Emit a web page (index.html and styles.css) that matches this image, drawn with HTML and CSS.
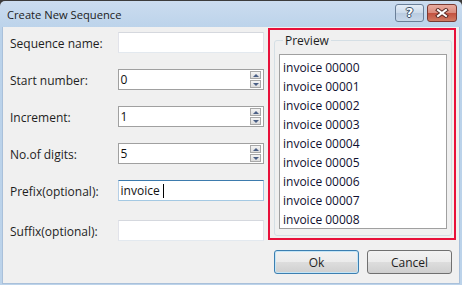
FILE: index.html
```html
<!DOCTYPE html>
<html lang="en">
<head>
    <meta charset="UTF-8">
    <meta name="viewport" content="width=device-width, initial-scale=1.0">
    <title>Create New Sequence</title>
    <link rel="stylesheet" href="styles.css">
</head>
<body>
    <div class="window">
        <div class="titlebar">
            <span class="title">Create New Sequence</span>
            <div class="caption-buttons">
                <span class="cap-btn help">?</span>
                <span class="cap-btn close">
                    <svg width="14" height="10" viewBox="0 0 14 10">
                        <path d="M3 2 L11 8 M11 2 L3 8" stroke="#5a2a25" stroke-width="4" stroke-linecap="square"/>
                        <path d="M3 2 L11 8 M11 2 L3 8" stroke="#fff" stroke-width="2" stroke-linecap="square"/>
                    </svg>
                </span>
            </div>
        </div>
        <div class="content">
            <div class="form">
                <div class="row">
                    <label>Sequence name:</label>
                    <div class="textbox"></div>
                </div>
                <div class="row">
                    <label>Start number:</label>
                    <div class="spinbox">
                        <span class="value">0</span>
                        <div class="spin"><span class="up"></span><span class="down"></span></div>
                    </div>
                </div>
                <div class="row">
                    <label>Increment:</label>
                    <div class="spinbox">
                        <span class="value">1</span>
                        <div class="spin"><span class="up"></span><span class="down"></span></div>
                    </div>
                </div>
                <div class="row">
                    <label>No.of digits:</label>
                    <div class="spinbox">
                        <span class="value">5</span>
                        <div class="spin"><span class="up"></span><span class="down"></span></div>
                    </div>
                </div>
                <div class="row">
                    <label>Prefix(optional):</label>
                    <div class="textbox focused"><span class="value">invoice </span><span class="caret"></span></div>
                </div>
                <div class="row last">
                    <label>Suffix(optional):</label>
                    <div class="textbox"></div>
                </div>
            </div>
            <div class="side">
                <div class="highlight">
                    <fieldset class="group">
                        <legend>Preview</legend>
                        <ul class="listbox">
                            <li>invoice 00000</li>
                            <li>invoice 00001</li>
                            <li>invoice 00002</li>
                            <li>invoice 00003</li>
                            <li>invoice 00004</li>
                            <li>invoice 00005</li>
                            <li>invoice 00006</li>
                            <li>invoice 00007</li>
                            <li>invoice 00008</li>
                        </ul>
                    </fieldset>
                </div>
                <div class="buttons">
                    <button class="btn default">Ok</button>
                    <button class="btn">Cancel</button>
                </div>
            </div>
        </div>
    </div>
</body>
</html>
```

FILE: styles.css
```css
body {
    margin: 0;
    background-color: #3c3c3c;
    font-family: "Open Sans", "Noto Sans", sans-serif;
    font-size: 12px;
    color: #1e1e1e;
}

.window {
    width: 462px;
    height: 285px;
    box-sizing: border-box;
    margin-top: 1px;
    padding: 0 2px 2px 2px;
    background: linear-gradient(#cbdcef, #bad2ea 30px, #bcd3ea);
    border-radius: 5px 5px 0 0;
    display: flex;
    flex-direction: column;
}

.titlebar {
    height: 26px;
    display: flex;
    align-items: center;
    justify-content: space-between;
}

.title {
    padding-left: 5px;
    padding-top: 1px;
    color: #1c1c1c;
    font-size: 11.2px;
}

.caption-buttons {
    display: flex;
    gap: 3px;
    margin-right: 3px;
    margin-top: -3px;
}

.cap-btn {
    height: 16px;
    border: 1px solid #6a7f98;
    border-radius: 3px;
    display: flex;
    align-items: center;
    justify-content: center;
}

.help {
    width: 27px;
    background: linear-gradient(#e4edf7, #cbdaea 50%, #b9cbe0 51%, #c8d8ea);
    color: #fff;
    font-family: "DejaVu Sans", sans-serif;
    font-weight: bold;
    font-size: 13px;
    text-shadow: 0 0 1px #3b4f68, 1px 0 0 #3b4f68, -1px 0 0 #3b4f68, 0 1px 0 #3b4f68, 0 -1px 0 #3b4f68;
}

.close {
    width: 28px;
    border-color: #7a3a32;
    background: linear-gradient(#e8ab9f, #d98a7b 50%, #c2503f 51%, #d17a62);
}

.content {
    flex: 1;
    background-color: #f0f0f0;
    border: 1px solid #a9c0da;
    border-top: none;
    display: flex;
    padding: 1px 2px 0 6px;
}

.form {
    width: 255px;
    padding-top: 4px;
    display: flex;
    flex-direction: column;
    gap: 16px;
}

.row {
    display: flex;
    align-items: center;
    height: 21px;
}

.row.last {
    margin-top: 3px;
}

.row label {
    width: 108px;
    padding-left: 1px;
    padding-top: 2px;
}

.textbox,
.spinbox {
    width: 147px;
    height: 21px;
    box-sizing: border-box;
    background-color: #fff;
    display: flex;
    align-items: center;
    padding-left: 2px;
}

.textbox {
    border: 1px solid #e2e3ea;
    border-top-color: #d5d8de;
    border-bottom-color: #e3e9ef;
}

.textbox.focused {
    border-color: #a4c9e3;
    border-top-color: #3d7bad;
    border-left-color: #b5cfe7;
}

.spinbox {
    border: 1px solid #a0a0a0;
    justify-content: space-between;
    padding-right: 2px;
}

.value {
    color: #111;
    white-space: pre;
}

.caret {
    width: 1px;
    height: 14px;
    background-color: #000;
}

.spin {
    display: flex;
    flex-direction: column;
    gap: 1px;
}

.spin span {
    width: 9px;
    height: 6px;
    border: 1px solid #a8a8a8;
    background: linear-gradient(#f4f4f4, #dcdcdc);
    display: flex;
    align-items: center;
    justify-content: center;
}

.spin .up::after {
    content: "";
    border-left: 3px solid transparent;
    border-right: 3px solid transparent;
    border-bottom: 3px solid #4a5f85;
}

.spin .down::after {
    content: "";
    border-left: 3px solid transparent;
    border-right: 3px solid transparent;
    border-top: 3px solid #4a5f85;
}

.side {
    margin-left: 4px;
    width: 188px;
    display: flex;
    flex-direction: column;
}

.highlight {
    height: 212px;
    box-sizing: border-box;
    border: 2px solid #e8103a;
    padding: 0 2px 2px 4px;
    display: flex;
}

.group {
    flex: 1;
    margin: 2px 0 0 0;
    padding: 5px 4px 5px 4px;
    border: 1px solid #d5dfe5;
    border-radius: 3px;
    min-width: 0;
}

.group legend {
    padding: 0 2px;
    margin-left: 4px;
    color: #1e1e1e;
}

.listbox {
    list-style: none;
    margin: 0;
    padding: 3px 0 0 3px;
    height: 175px;
    box-sizing: border-box;
    background-color: #fff;
    border: 1px solid #a0a0a0;
}

.listbox li {
    height: 19px;
    line-height: 19px;
    color: #101030;
    font-size: 12px;
}

.buttons {
    display: flex;
    justify-content: flex-end;
    gap: 8px;
    margin-top: 10px;
    padding-right: 4px;
}

.btn {
    width: 85px;
    height: 24px;
    font-family: "Open Sans", "Noto Sans", sans-serif;
    font-size: 12px;
    color: #1e1e1e;
    border: 1px solid #707070;
    border-radius: 3px;
    background: linear-gradient(#f2f2f2, #ebebeb 50%, #dddddd 51%, #cfcfcf);
    padding: 0;
}

.btn.default {
    border-color: #3c7fb1;
    box-shadow: inset 0 0 0 1px #c4e5f6;
}
```
